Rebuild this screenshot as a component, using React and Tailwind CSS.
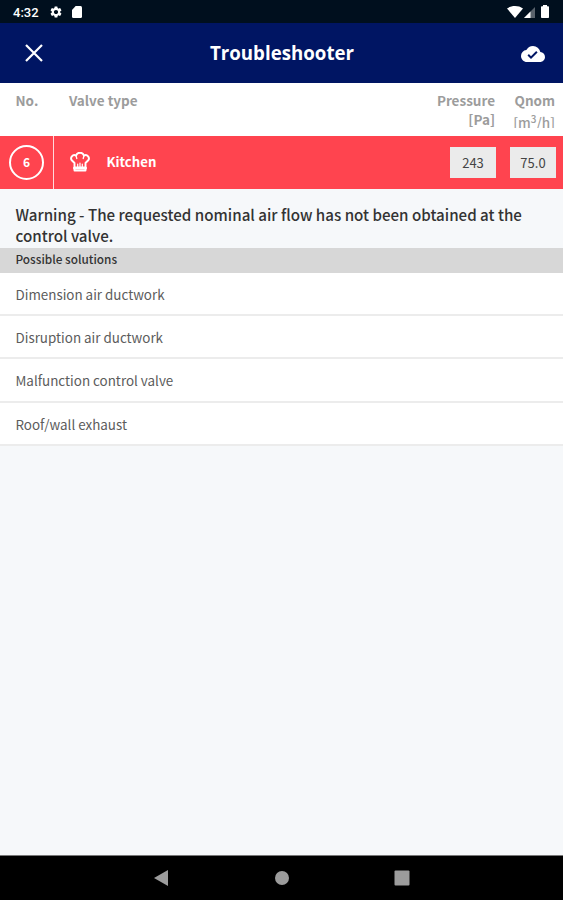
import React from 'react'
import { MdCloudDone, MdSettings } from 'react-icons/md'

const SOLUTIONS = [
  'Dimension air ductwork',
  'Disruption air ductwork',
  'Malfunction control valve',
  'Roof/wall exhaust',
]

function StatusBar() {
  return (
    <div className="flex h-[23px] shrink-0 items-center bg-[#000f1e] px-[13px] text-white">
      <span className="w-[36px] pt-px font-['Roboto',sans-serif] text-[13px] leading-none font-medium">4:32</span>
      <MdSettings size={14} className="mt-px" />
      <svg width="10" height="12" viewBox="0 0 11 12" preserveAspectRatio="none" className="mt-px ml-[9px]" fill="currentColor">
        <path d="M4 0h5.5A1.5 1.5 0 0 1 11 1.500v9a1.500 1.500 0 0 1-1.500 1.500h-8A1.500 1.500 0 0 1 0 10.500V4z" />
      </svg>
      <div className="ml-auto flex items-center">
        <svg width="16" height="12" viewBox="0 0 16 12" fill="currentColor">
          <path d="M8 12 0 2.500C4.500-.8 11.500-.8 16 2.500z" />
        </svg>
        <svg width="11" height="12" viewBox="0 0 11 12" className="ml-px">
          <path d="M0 12 11 1v11z" fill="#fff" fillOpacity="0.35" />
          <path d="M0 12 6.500 5.500V12z" fill="#fff" />
        </svg>
        <svg width="8" height="13" viewBox="0 0 8 13" className="ml-[6px] mr-px" fill="currentColor">
          <path d="M2 0h4v1.300h1.200a.8.8 0 0 1 .8.8v10.100a.8.8 0 0 1-.8.8H.8a.8.8 0 0 1-.8-.8V2.100a.8.8 0 0 1 .8-.8H2z" />
        </svg>
      </div>
    </div>
  )
}

function Header() {
  return (
    <header className="flex h-[60px] shrink-0 items-center justify-between bg-[#001563] pr-[18px] pl-[25px] text-white">
      <button className="w-[19px]">
        <svg width="18" height="18" viewBox="0 0 18 18" fill="none" stroke="currentColor" strokeWidth="2.200">
          <path d="M1 1 17 17M17 1 1 17" />
        </svg>
      </button>
      <h1 className="pr-px font-['Open_Sans',sans-serif] text-[18.700px] leading-none font-bold">Troubleshooter</h1>
      <MdCloudDone size={24} className="mt-px" />
    </header>
  )
}

function ChefHat() {
  return (
    <svg width="20" height="20" viewBox="0 0 20 20" fill="none" stroke="currentColor" strokeWidth="1.900" strokeLinejoin="round" strokeLinecap="round">
      <path d="M4.500 18.500V11L2 8.500A3.200 3.200 0 0 1 6 3.600 4.200 4.200 0 0 1 14 3.600 3.200 3.200 0 0 1 18 8.500L15.500 11V18.500Z" />
      <path d="M4.500 16h11" strokeWidth="3" />
      <path d="M7.700 12v3M10 11v4M12.300 12v3" strokeWidth="1.200" />
      <path d="M6 3.600 6.800 6.500M14 3.600 13.200 6.500" strokeWidth="1.300" />
    </svg>
  )
}

function ValueBox({ children }) {
  return (
    <span className="flex h-[31px] w-[46px] items-center justify-center bg-[#ebebeb] text-[13px] text-[#444]">
      {children}
    </span>
  )
}

function ValveTable() {
  return (
    <section>
      <div className="flex h-[53px] bg-white pt-[8px] text-[13.500px] leading-[19px] font-bold text-[#9c9c9c]">
        <span className="w-[53px] pl-[15.500px]">No.</span>
        <span className="pl-4">Valve type</span>
        <span className="ml-auto text-right">Pressure<br />[Pa]</span>
        <span className="h-[37px] w-[60px] overflow-hidden text-right">
          <span className="block">Qnom</span>
          <span className="block pt-[3px] font-medium">[m<sup className="relative -top-[5px] align-baseline text-[10px] leading-none">3</sup>/h]</span>
        </span>
        <span className="w-[8px]" />
      </div>
      <div className="flex h-[53px] items-center bg-[#ff444f] text-white">
        <div className="flex h-full w-[54px] items-center justify-center border-r border-white/80 pb-px">
          <span className="flex size-[35px] items-center justify-center rounded-full border-2 border-white text-[12px] font-bold">6</span>
        </div>
        <div className="flex items-center gap-[16.500px] pl-4">
          <ChefHat />
          <span className="pb-px text-[13.200px] font-bold">Kitchen</span>
        </div>
        <div className="ml-auto flex gap-[14px] pr-[7px]">
          <ValueBox>243</ValueBox>
          <ValueBox>75.0</ValueBox>
        </div>
      </div>
    </section>
  )
}

function Solutions() {
  return (
    <section>
      <h2 className="bg-[#d7d7d7] pb-[4px] pl-[15.500px] text-[11.800px] leading-[21px] font-medium text-[#333]">Possible solutions</h2>
      <ul>
        {SOLUTIONS.map((solution) => (
          <li key={solution} className="h-[43.200px] border-b-2 border-[#ececec] bg-white pl-[15.500px] text-[13.400px] leading-[42px] text-[#5c5c5c]">
            {solution}
          </li>
        ))}
      </ul>
    </section>
  )
}

function NavBar() {
  return (
    <nav className="flex h-[45px] shrink-0 items-center justify-center border-t border-[#777] bg-black">
      <svg width="256" height="16" viewBox="0 0 256 16" fill="#9c9c9c">
        <path d="M0 8 14 0v16z" />
        <circle cx="128" cy="8" r="7" />
        <rect x="240.500" y="0.500" width="15" height="15" rx="1" />
      </svg>
    </nav>
  )
}

export default function App() {
  return (
    <div className="flex h-[900px] w-[563px] flex-col overflow-hidden bg-[#f6f8fa] font-['Noto_Sans_CJK_SC',sans-serif]">
      <StatusBar />
      <Header />
      <main className="flex-1">
        <ValveTable />
        <p className="h-[59px] pt-[15px] pl-[15.500px] text-[15.150px] leading-[21px] font-medium text-[#333]">
          Warning - The requested nominal air flow has not been obtained at the<br />control valve.
        </p>
        <Solutions />
      </main>
      <NavBar />
    </div>
  )
}
